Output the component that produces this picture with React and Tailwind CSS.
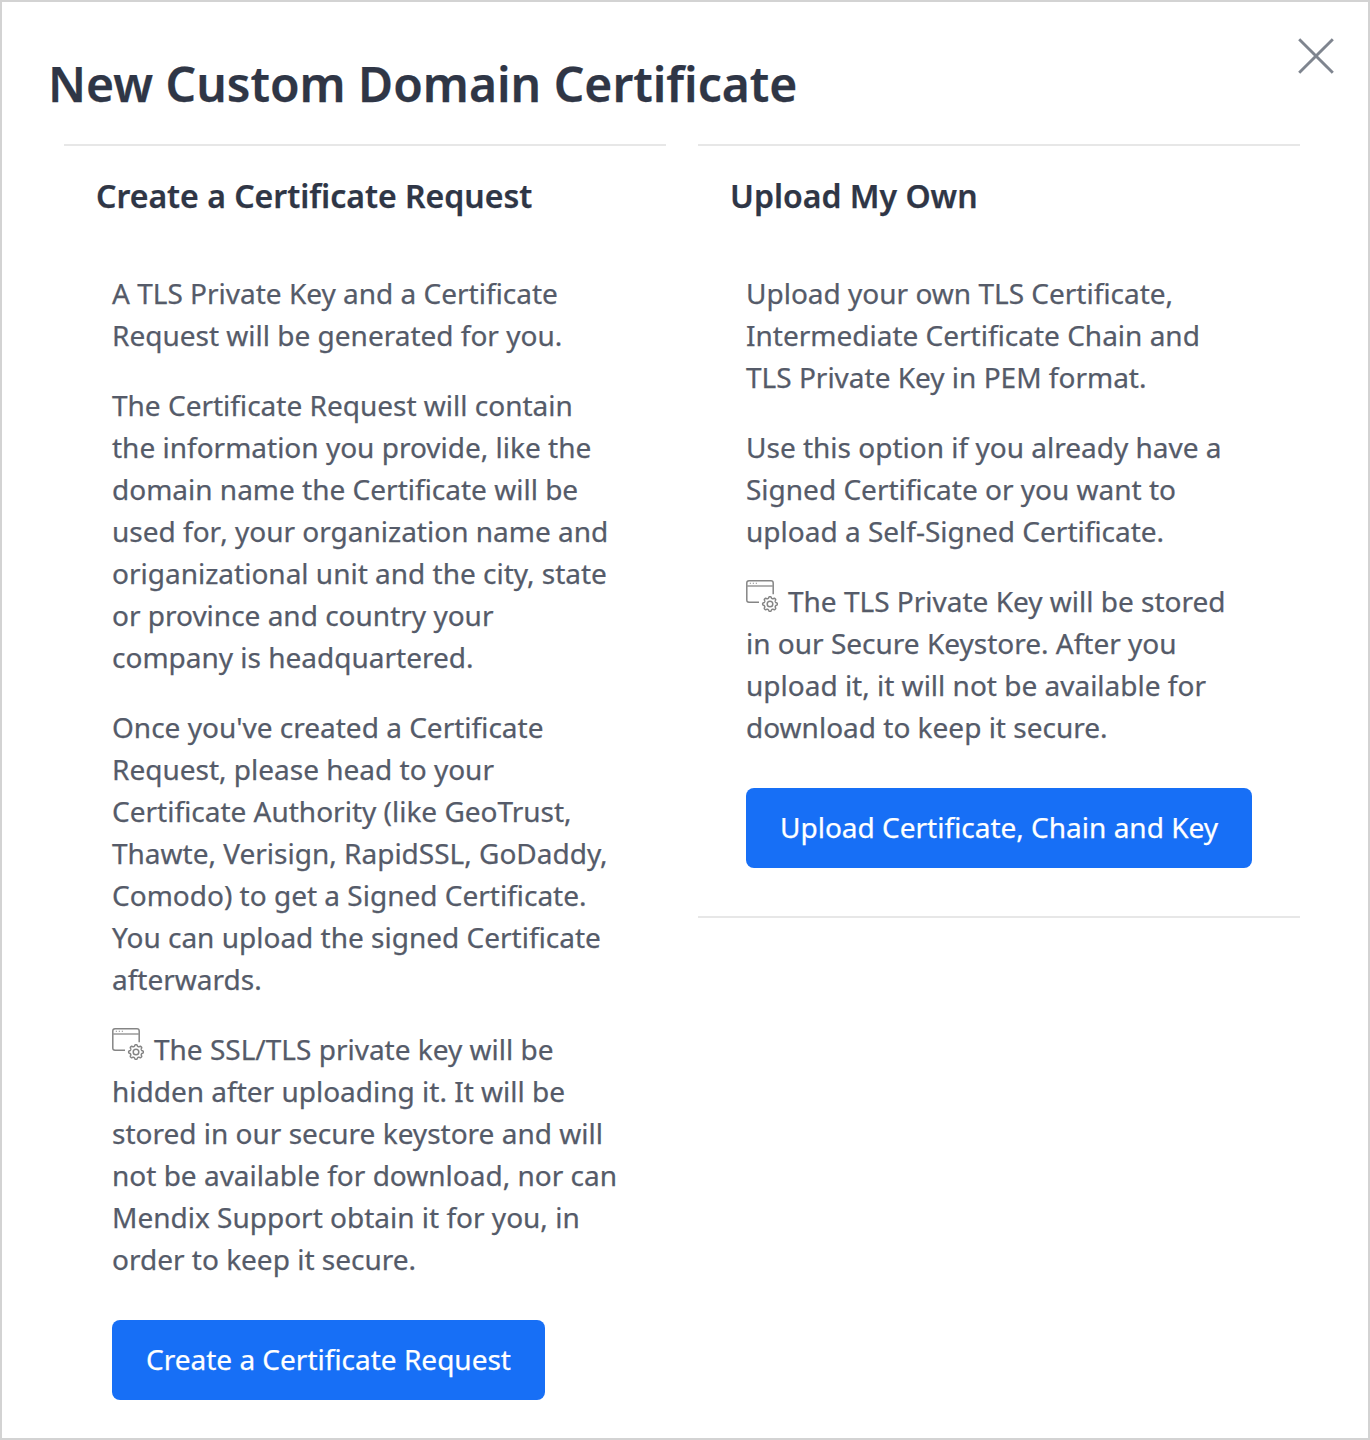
// Outline of an eight-toothed gear centred at (24, 24).
const gearPath =
  "M" +
  Array.from({ length: 96 }, (_, i) => {
    const t = (i / 96) * Math.PI * 2;
    const r = 6.6 + 0.8 * Math.tanh(2 * Math.cos(8 * t));
    return `${(24 + r * Math.cos(t)).toFixed(2)} ${(24 + r * Math.sin(t)).toFixed(2)}`;
  }).join("L") +
  "Z";

const Gear = () => (
  <svg className="mr-[10px] inline-block h-8 w-8 align-[0px]" viewBox="0 0 32 32" fill="none" stroke="#858585" strokeWidth="1.5">
    <path d="M13 22.2H3Q.8 22.2 .8 20V3Q.8 .8 3 .8H25Q27.2 .8 27.2 3V14.3" />
    <path d="M.8 6H27.2" stroke="#999999" />
    <path d="M3.8 3.3h1.1M6.8 3.3h1.1M9.8 3.3h1.1" strokeWidth="1.1" />
    <circle cx="24" cy="24" r="2.8" />
    <path d={gearPath} strokeLinejoin="round" />
  </svg>
);

const Lines = ({ lines, icon }) => (
  <p className="mb-7 whitespace-nowrap">
    {icon && <Gear />}
    {lines.map((l, i) => (
      <span key={i}>{l}{i < lines.length - 1 && <br />}</span>
    ))}
  </p>
);

export default function App() {
  return (
    <main className="relative h-[1440px] w-[1370px] border-2 border-[#d3d3d3] bg-white px-[46px] pt-[49px] font-['Noto_Sans',sans-serif] text-[28px] leading-[42px] text-[#555b69] [-webkit-text-stroke:0.25px]">
      <button aria-label="Close" className="absolute top-9 right-[34px]">
        <svg className="h-9 w-9" viewBox="0 0 36 36" stroke="#7f858f" strokeWidth="2.9" fill="none"><path d="M1.2 1.2L34.8 34.8M34.8 1.2L1.2 34.8" /></svg>
      </button>
      <h1 className="h-[93px] text-[48px] leading-[66px] font-semibold whitespace-nowrap text-[#2f3646]">New Custom Domain Certificate</h1>
      <div className="ml-4 flex items-start gap-8">
        <section className="w-[602px] border-t-2 border-[#e7e7e7] pl-8">
          <h2 className="mt-[29px] mb-[55px] text-[32px] leading-[42px] font-semibold whitespace-nowrap text-[#2f3646]">Create a Certificate Request</h2>
          <div className="pl-4">
            <Lines lines={["A TLS Private Key and a Certificate", "Request will be generated for you."]} />
            <Lines lines={["The Certificate Request will contain", "the information you provide, like the", "domain name the Certificate will be", <>used for<span className="-ml-px">, your organization name and</span></>, "origanizational unit and the city, state", "or province and country your", "company is headquartered."]} />
            <Lines lines={["Once you've created a Certificate", "Request, please head to your", "Certificate Authority (like GeoTrust,", "Thawte, Verisign, RapidSSL, GoDaddy,", "Comodo) to get a Signed Certificate.", "You can upload the signed Certificate", "afterwards."]} />
            <Lines icon lines={["The SSL/TLS private key will be", "hidden after uploading it. It will be", "stored in our secure keystore and will", "not be available for download, nor can", "Mendix Support obtain it for you, in", "order to keep it secure."]} />
            <button className="mt-10 block h-20 w-[433px] rounded-lg bg-[#176ff6] pb-0.5 whitespace-nowrap text-white">Create a Certificate Request</button>
          </div>
        </section>
        <section className="h-[774px] w-[602px] border-y-2 border-[#e7e7e7] pl-8">
          <h2 className="mt-[29px] mb-[55px] text-[32px] leading-[42px] font-semibold whitespace-nowrap text-[#2f3646]">Upload My Own</h2>
          <div className="pl-4">
            <Lines lines={["Upload your own TLS Certificate,", "Intermediate Certificate Chain and", "TLS Private Key in PEM format."]} />
            <Lines lines={["Use this option if you already have a", "Signed Certificate or you want to", "upload a Self-Signed Certificate."]} />
            <Lines icon lines={["The TLS Private Key will be stored", "in our Secure Keystore. After you", "upload it, it will not be available for", "download to keep it secure."]} />
            <button className="mt-10 block h-20 w-[506px] rounded-lg bg-[#176ff6] pb-0.5 whitespace-nowrap text-white">Upload Certificate, Chain and Key</button>
          </div>
        </section>
      </div>
    </main>
  );
}
